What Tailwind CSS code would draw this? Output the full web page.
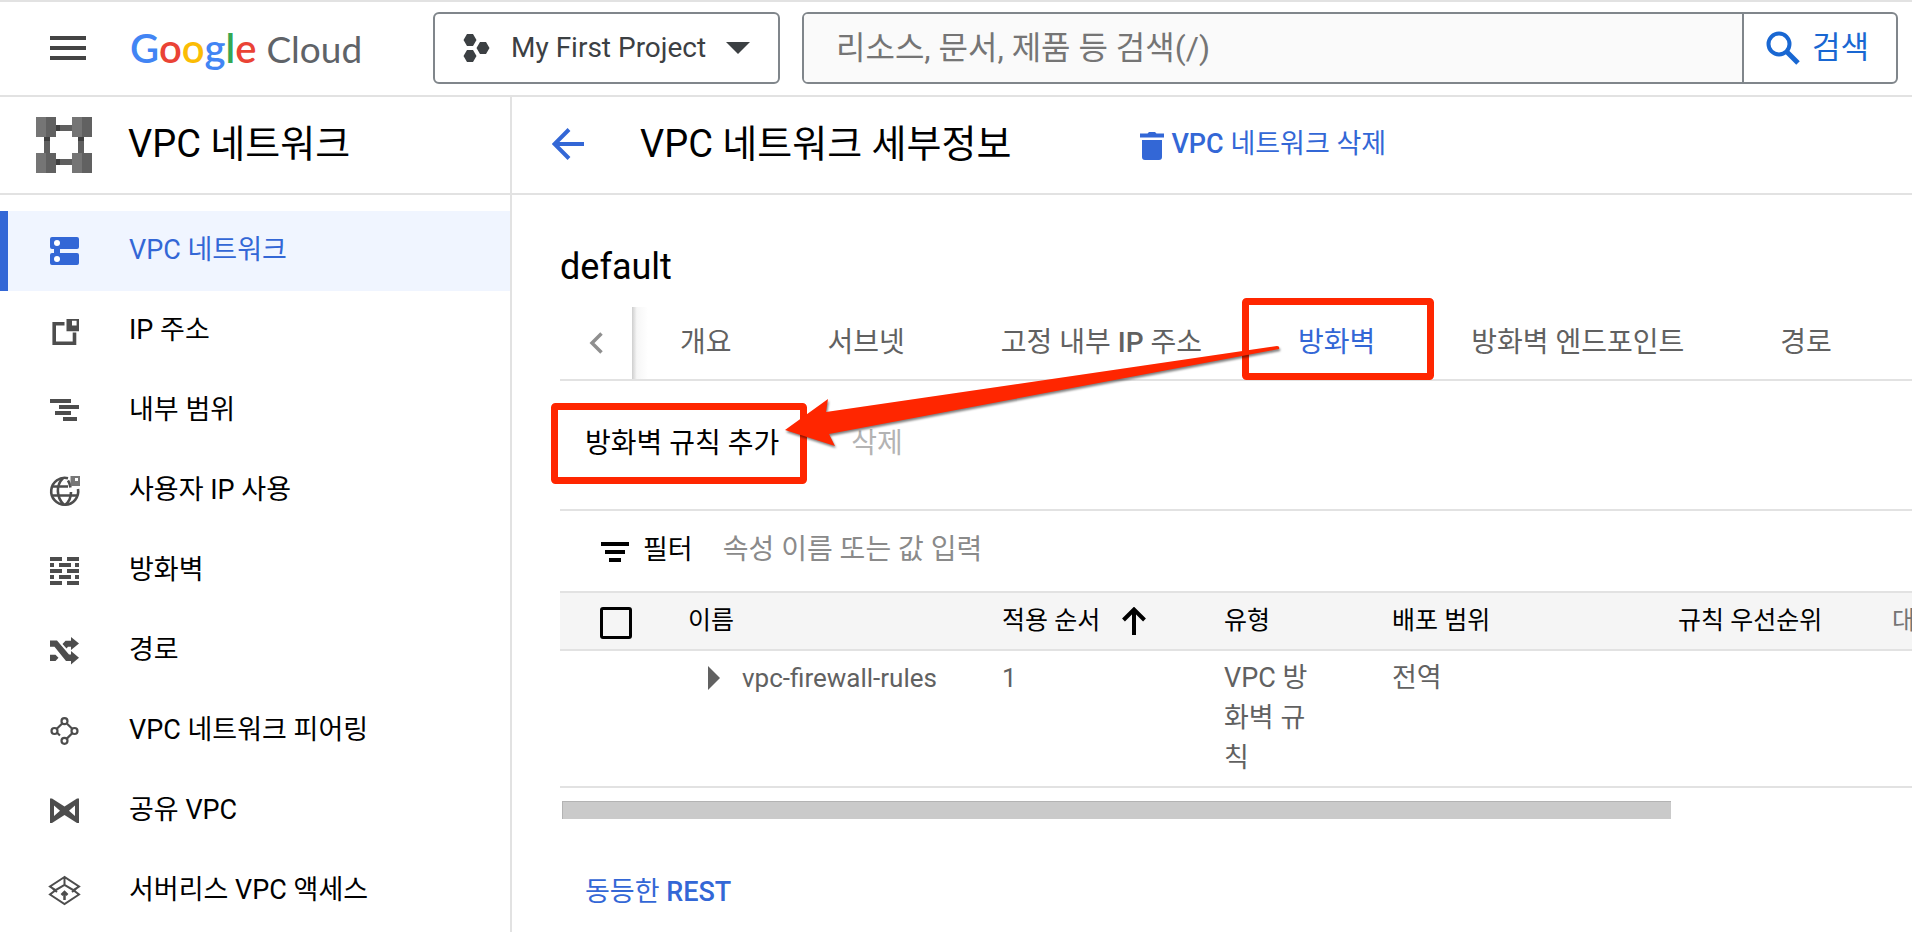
<!DOCTYPE html>
<html lang="ko">
  <head>
    <meta charset="UTF-8" />
    <meta name="viewport" content="width=device-width, initial-scale=1.0" />
    <title>VPC 네트워크 세부정보</title>
    <script src="https://cdn.jsdelivr.net/npm/@tailwindcss/browser@4"></script>
  </head>
  <body
    class="flex h-screen flex-col overflow-hidden bg-white font-['Roboto','Noto_Sans_CJK_KR',sans-serif] text-[27px] leading-10 text-black"
  >
    <!-- Top bar -->
    <header class="flex h-[97px] shrink-0 items-center border-y-2 border-[#e2e2e2] pr-3.5 pb-0.5 pl-[50px]">
      <button type="button" aria-label="메뉴" class="mr-11">
        <svg class="h-6 w-9" viewBox="0 0 36 24" fill="#444">
          <path d="M0 0h36v4H0zM0 10h36v4H0zM0 20h36v4H0z" />
        </svg>
      </button>
      <a href="#" class="flex w-[303px] items-baseline gap-2.5 font-['Lato',sans-serif] text-[40px] leading-none">
        <span class="font-semibold"
          ><span class="text-[#4285f4]">G</span><span class="text-[#ea4335]">o</span><span class="text-[#fbbc04]">o</span
          ><span class="text-[#4285f4]">g</span><span class="text-[#34a853]">l</span><span class="text-[#ea4335]">e</span></span
        >
        <span class="text-[37px] text-[#5f6368]">Cloud</span>
      </a>
      <button
        type="button"
        class="flex h-[72px] w-[347px] shrink-0 items-center rounded-md border-2 border-[#80868b] pr-7 pl-7 text-[28px] text-[#3c4043]"
      >
        <svg class="mr-5 h-7 w-7" viewBox="0 0 28 28" fill="#3c4043">
          <path d="M4 0h6l3.500 6-3.500 6H4L.5 6zM4 16h6l3.500 6-3.500 6H4l-3.500-6zM17 8h6l3.500 6-3.500 6h-6l-3.500-6z" />
        </svg>
        My First Project
        <svg class="ml-auto h-3 w-6" viewBox="0 0 24 12" fill="#3c4043"><path d="M0 0h24L12 12z" /></svg>
      </button>
      <form class="ml-[22px] flex h-[72px] flex-1 items-stretch rounded-md border-2 border-[#80868b]">
        <input
          type="search"
          aria-label="검색"
          placeholder="리소스, 문서, 제품 등 검색(/)"
          class="min-w-0 flex-1 rounded-l bg-[#fafafa] pl-8 text-[32px] outline-none placeholder:text-[#757575]"
        />
        <button
          type="button"
          class="flex w-[154px] items-center gap-3 border-l-2 border-[#80868b] pl-[22px] text-[31px] text-[#1967d2]"
        >
          <svg class="h-[34px] w-[34px]" viewBox="0 0 34 34" fill="none" stroke="#1967d2" stroke-width="4">
            <circle cx="13" cy="13" r="10.5" />
            <path d="M20.5 20.5L32 32" stroke-width="5" />
          </svg>
          검색
        </button>
      </form>
    </header>

    <div class="flex min-h-0 flex-1">
      <!-- Side navigation -->
      <aside class="w-[512px] shrink-0 border-r-2 border-[#e2e2e2]">
        <div class="flex h-[98px] items-center gap-9 border-b-2 border-[#e2e2e2] pl-9 text-[38px]">
          <svg class="h-14 w-14" viewBox="0 0 56 56">
            <path d="M20 8h16v6H20zM20 42h16v6H20zM8 20h6v16H8zM42 20h6v16h-6z" fill="#5f5f5f" />
            <path d="M20 8h4v6h-4zM20 42h4v6h-4zM8 20h6v4H8zM42 20h6v4h-6z" fill="#3f3f3f" />
            <path d="M0 0h20v20H0zM36 0h20v20H36zM0 36h20v20H0zM36 36h20v20H36z" fill="#757575" />
            <path d="M10 0h10v20H10zM46 0h10v20H46zM10 36h10v20H10zM46 36h10v20H46z" fill="#616161" />
          </svg>
          <span class="pb-0.5">VPC 네트워크</span>
        </div>
        <nav class="pt-4">
          <a href="#" aria-current="page" class="flex h-20 items-center gap-[50px] border-l-8 border-[#3367d6] bg-[#f0f5ff] pl-[42px] text-[#3367d6]">
            <svg class="h-7 w-[29px]" viewBox="0 0 29 28" fill="#3367d6">
              <path d="M2 0h25a2 2 0 0 1 2 2v8a2 2 0 0 1-2 2H10v4h17a2 2 0 0 1 2 2v8a2 2 0 0 1-2 2H2a2 2 0 0 1-2-2v-8a2 2 0 0 1 2-2h2v-4H2a2 2 0 0 1-2-2V2a2 2 0 0 1 2-2z" />
              <circle cx="7" cy="6" r="3" fill="#fff" />
              <circle cx="7" cy="22" r="3" fill="#fff" />
            </svg>
            <span class="pb-0.5">VPC 네트워크</span>
          </a>
          <a href="#" class="flex h-20 items-center gap-[50px] pl-[50px]">
            <svg class="h-7 w-[29px]" viewBox="0 0 29 28" fill="#4d4d4d">
              <path d="M14.5 6.7H4.2v19.5h20.3V15.5" fill="none" stroke="#4d4d4d" stroke-width="3.6" />
              <path d="M16.5 2H29v12.3H16.5zM22 3.8v4.6h4.6V3.8z" fill-rule="evenodd" />
            </svg>
            <span class="pb-0.5">IP 주소</span>
          </a>
          <a href="#" class="flex h-20 items-center gap-[50px] pl-[50px]">
            <svg class="h-7 w-[29px]" viewBox="0 0 29 28" fill="#4d4d4d">
              <path d="M0 2h21v4H0zM9 8h20v4H9zM5 14h16v4H5zM13 20h14v4H13z" />
            </svg>
            <span class="pb-0.5">내부 범위</span>
          </a>
          <a href="#" class="flex h-20 items-center gap-[50px] pl-[50px]">
            <svg class="h-7 w-[29px] overflow-visible" viewBox="0 0 29 28" fill="none" stroke="#4d4d4d" stroke-width="2.6">
              <path d="M18 1.2A13.500 13.500 0 1 0 28 12" />
              <path d="M2.500 9.500H18M2.500 18.500h25M13 1C6 8 6 20 14 28M18 3.500q2 3 2.500 7M15 28c4-3 6-8 6-13" />
              <path d="M20.500-1H30v10h-9.500zM25 1v3h3V1z" fill="#777" fill-rule="evenodd" stroke="none" />
            </svg>
            <span class="pb-0.5">사용자 IP 사용</span>
          </a>
          <a href="#" class="flex h-20 items-center gap-[50px] pl-[50px]">
            <svg class="h-7 w-[29px]" viewBox="0 0 29 28" fill="#4d4d4d">
              <path d="M0 0h12v4H0zM17 0h12v4H17zM0 6h4v4H0zM9 6h12v4H9zM25 6h4v4h-4zM0 12h12v4H0zM17 12h12v4H17zM0 18h4v4H0zM9 18h12v4H9zM25 18h4v4h-4zM0 24h12v4H0zM17 24h12v4H17z" />
            </svg>
            <span class="pb-0.5">방화벽</span>
          </a>
          <a href="#" class="flex h-20 items-center gap-[50px] pl-[50px]">
            <svg class="h-7 w-[29px]" viewBox="0 0 29 28" fill="#4d4d4d">
              <path d="M0 3.500h7L19 17.500h2V14l8 6.700-8 6.700V24h-5L4.500 9.700H0z" />
              <path d="M21 0l8 6.500-8 6.500V9.700h-3l-1.500 1.800-4-4.500 3-3.300H21zM0 17.700h5.500l3 3-3 3.300H0z" />
            </svg>
            <span class="pb-0.5">경로</span>
          </a>
          <a href="#" class="flex h-20 items-center gap-[50px] pl-[50px]">
            <svg class="h-7 w-[29px]" viewBox="0 0 29 28" fill="none" stroke="#4d4d4d" stroke-width="2.200">
              <circle cx="14.500" cy="4.200" r="3" />
              <circle cx="4.500" cy="14" r="3" />
              <circle cx="24.500" cy="14" r="3" />
              <circle cx="14.500" cy="23.800" r="3" />
              <path d="M12.200 6.500L6.800 11.800M16.800 6.500l5.400 5.300M22.200 16.200l-5.400 5.400M6.800 15.500L10 18.500" />
            </svg>
            <span class="pb-0.5">VPC 네트워크 피어링</span>
          </a>
          <a href="#" class="flex h-20 items-center gap-[50px] pl-[50px]">
            <svg class="h-7 w-[29px]" viewBox="0 0 29 28" fill="#4d4d4d">
              <path fill-rule="evenodd" d="M0 1.500L2 1.500 14.500 9.500 27 1.500h2v24.500h-2L14.500 18 2 26H0zM4 8.500v10.500l6-5.200zM25 8.500v10.500l-6-5.200z" />
            </svg>
            <span class="pb-0.5">공유 VPC</span>
          </a>
          <a href="#" class="flex h-20 items-center gap-[50px] pl-[50px]">
            <svg class="h-7 w-[29px] overflow-visible" viewBox="0 0 29 28" fill="none" stroke="#4d4d4d" stroke-width="2">
              <path d="M14.500 0L0 9.500l5.500 3.700L14.500 8l9 5.200L29 9.500zM14.500 0v8" />
              <path d="M5.500 13.200L0 17.500l14.500 9.500L29 17.500l-5.500-4.300M3 12l4 3M26 12l-4 3" />
              <path d="M14.500 23v-8M11.500 18l3-3 3 3" stroke-width="2.500" />
            </svg>
            <span class="pb-0.5">서버리스 VPC 액세스</span>
          </a>
        </nav>
      </aside>

      <!-- Details -->
      <main class="relative min-w-0 flex-1 overflow-hidden">
        <div class="flex h-[98px] items-center border-b-2 border-[#e2e2e2] pb-0.5 pl-10">
          <button type="button" aria-label="뒤로" class="mr-14">
            <svg class="h-8 w-8" viewBox="0 0 32 32" fill="none" stroke="#3367d6" stroke-width="4">
              <path d="M32 16H3M17 1.500L2.500 16 17 30.500" />
            </svg>
          </button>
          <h1 class="text-[38px]">VPC 네트워크 세부정보</h1>
          <button type="button" class="ml-[129px] flex items-center gap-[7px] text-[#3367d6]">
            <svg class="mt-1 h-7 w-6" viewBox="0 0 24 28" fill="#3367d6">
              <path d="M0 1.500h7.500L9 0h6l1.500 1.500H24v4H0zM2 8h20v17a3 3 0 0 1-3 3H5a3 3 0 0 1-3-3z" />
            </svg>
            <span><span class="font-medium">VPC</span> 네트워크 삭제</span>
          </button>
        </div>

        <div class="pl-12">
          <h2 class="pt-[50px] text-[36px] leading-[44px]">default</h2>

          <div class="mt-[18px] flex h-[74px] border-b-2 border-[#e2e2e2]" role="tablist">
            <button type="button" aria-label="이전 탭" class="flex w-[72px] shrink-0 items-center pl-[29px]">
              <svg class="h-[22px] w-3.5" viewBox="0 0 14 22" fill="none" stroke="#8f8f8f" stroke-width="3.500">
                <path d="M12.500 1.500L3 11l9.500 9.500" />
              </svg>
            </button>
            <div class="w-4 shrink-0 bg-linear-to-r from-[#cecece] via-[#f6f6f6] via-30% to-white"></div>
            <div class="-ml-4 flex shrink-0 text-[28px] text-[#616161]">
              <button type="button" role="tab" class="px-12">개요</button>
              <button type="button" role="tab" class="px-12">서브넷</button>
              <button type="button" role="tab" class="px-12">고정 내부 <span class="font-medium">IP</span> 주소</button>
              <button type="button" role="tab" aria-selected="true" class="px-12 text-[#3367d6]">방화벽</button>
              <button type="button" role="tab" class="px-12">방화벽 엔드포인트</button>
              <button type="button" role="tab" class="px-12">경로</button>
            </div>
          </div>

          <div class="flex h-[128px] gap-[72px] pl-[25px] text-[28px]">
            <button type="button" class="h-[126px]">방화벽 규칙 추가</button>
            <button type="button" disabled class="h-[126px] text-[#b3b3b3]">삭제</button>
          </div>

          <div class="flex h-[82px] items-center border-t-2 border-[#e2e2e2] pb-0.5 pl-[41px]">
            <svg class="mt-1 mr-3.5 h-5 w-7" viewBox="0 0 28 20"><path d="M0 0h28v4H0zM4 8h20v4H4zM8 16h12v4H8z" /></svg>
            <label for="filter" class="mr-[30px] text-[27px]">필터</label>
            <input id="filter" type="text" placeholder="속성 이름 또는 값 입력" class="min-w-0 flex-1 text-[28px] outline-none placeholder:text-[#8a8a8a]" />
          </div>

          <div class="overflow-hidden">
            <table class="w-[1532px] table-fixed text-left">
              <colgroup>
                <col class="w-32" />
                <col class="w-[314px]" />
                <col class="w-[222px]" />
                <col class="w-[168px]" />
                <col class="w-[286px]" />
                <col class="w-[214px]" />
                <col />
              </colgroup>
              <thead class="border-y-2 border-[#e2e2e2] bg-[#f5f5f5] text-[25px]">
                <tr class="h-[58px] *:font-normal">
                  <th class="pl-10">
                    <input type="checkbox" aria-label="모두 선택" class="mt-1 block h-8 w-8 appearance-none rounded-[3px] border-[3px] border-black" />
                  </th>
                  <th>이름</th>
                  <th>
                    <span class="flex items-center gap-[22px]">
                      적용 순서
                      <svg class="h-7 w-6" viewBox="0 0 24 28" fill="none" stroke="#000" stroke-width="4">
                        <path d="M12 28V3M1.500 13L12 2.500 22.500 13" />
                      </svg>
                    </span>
                  </th>
                  <th>유형</th>
                  <th>배포 범위</th>
                  <th>규칙 우선순위</th>
                  <th class="text-[#757575]">대상</th>
                </tr>
              </thead>
              <tbody>
                <tr class="border-b-2 border-[#e2e2e2] align-top text-[#616161]">
                  <td></td>
                  <td class="pt-[7px]">
                    <button type="button" class="flex items-center gap-[22px] pl-5 text-[26px]">
                      <svg class="h-6 w-3" viewBox="0 0 12 24" fill="#616161"><path d="M0 0l12 12L0 24z" /></svg>
                      vpc-firewall-rules
                    </button>
                  </td>
                  <td class="pt-[7px] text-[26px]">1</td>
                  <td class="pt-[7px] pr-[72px] pb-2">VPC 방화벽 규칙</td>
                  <td class="pt-[7px]">전역</td>
                  <td></td>
                  <td></td>
                </tr>
              </tbody>
            </table>
          </div>
          <div class="mt-[13px] ml-0.5 h-[18px] w-[82%] border-t border-l border-[#b3b3b3] bg-[#cacaca]"></div>

          <a href="#" class="mt-[53px] ml-[25px] inline-block text-[#3367d6]">동등한 <span class="font-medium">REST</span></a>
        </div>

        <!-- Callout boxes and arrow -->
        <svg class="pointer-events-none absolute top-0 left-0 h-[420px] w-[960px]" viewBox="0 0 960 420" fill="none">
          <rect x="733.500" y="204.500" width="185" height="75" rx="1" stroke="#ff2600" stroke-width="7" />
          <rect x="42.500" y="309.500" width="249" height="74" rx="1" stroke="#ff2600" stroke-width="7" />
          <path
            class="drop-shadow-[1px_2px_1px_rgba(0,0,0,0.5)]"
            d="M273 333L316 302 314 315 765 249q3 0 2 3L317 337 323 349z"
            fill="#ff2600"
          />
        </svg>
      </main>
    </div>
  </body>
</html>
